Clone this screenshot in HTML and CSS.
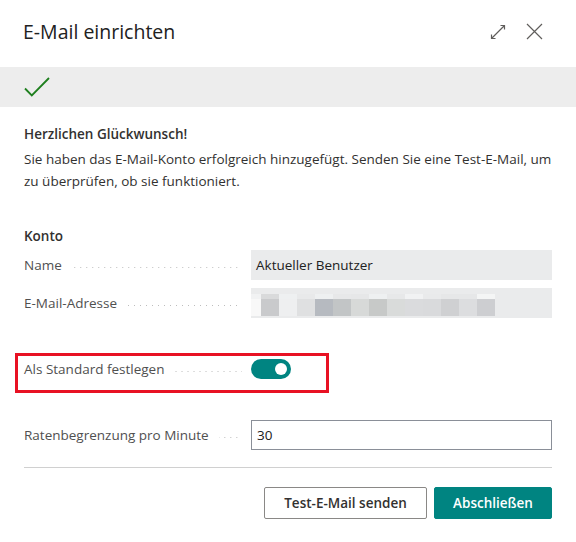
FILE: index.html
```html
<!DOCTYPE html>
<html>
    <head>
        <meta charset="utf-8">
        <link rel="stylesheet" href="styles.css">
    </head>

    <body>
        <div class="dialog">
            <header class="head">
                <h1>E-Mail einrichten</h1>
                <div class="tools">
                    <svg class="ico" width="16" height="16" viewBox="0 0 16 16">
                        <path d="M10.5 1.5h4v4M14.5 1.5l-13 13M1.5 10.5v4h4" />
                    </svg>
                    <svg class="ico close" width="17" height="17" viewBox="0 0 17 17">
                        <path d="M1 1l15 15M16 1L1 16" />
                    </svg>
                </div>
            </header>

            <div class="status">
                <svg width="28" height="22" viewBox="0 0 28 22">
                    <path d="M1 11.5l6.8 7L25 1" />
                </svg>
            </div>

            <div class="content">
                <h2>Herzlichen Glückwunsch!</h2>
                <p>Sie haben das E-Mail-Konto erfolgreich hinzugefügt. Senden Sie eine Test-E-Mail, um zu überprüfen, ob sie funktioniert.</p>

                <h3>Konto</h3>
                <div class="field">
                    <div class="label"><span>Name</span><i class="lead"></i></div>
                    <div class="value ro">Aktueller Benutzer</div>
                </div>
                <div class="field">
                    <div class="label"><span>E-Mail-Adresse</span><i class="lead"></i></div>
                    <div class="value ro">
                        <div class="pixels">
                            <span></span><span></span><span></span><span></span><span></span>
                            <span></span><span></span><span></span><span></span><span></span>
                            <span></span><span></span><span></span><span></span>
                        </div>
                    </div>
                </div>

                <div class="field toggle-row marked">
                    <div class="label"><span>Als Standard festlegen</span><i class="lead"></i></div>
                    <div class="value">
                        <span class="switch"><span class="knob"></span></span>
                    </div>
                </div>

                <div class="field rate">
                    <div class="label"><span>Ratenbegrenzung pro Minute</span><i class="lead"></i></div>
                    <input class="value edit" type="text" value="30">
                </div>

                <div class="divider"></div>

                <div class="actions">
                    <button class="btn">Test-E-Mail senden</button>
                    <button class="btn primary">Abschließen</button>
                </div>
            </div>
        </div>
    </body>
</html>
```

FILE: styles.css
```css
* {
    box-sizing: border-box;
}

body {
    margin: 0;
    padding: 0;
    background-color: #fff;
    font-family: "Open Sans", "Noto Sans", Arial, sans-serif;
    font-size: 13.5px;
    color: #212121;
}

.dialog {
    width: 576px;
    height: 542px;
}

.head {
    height: 67px;
    display: flex;
    align-items: center;
    padding: 0 33px 0 23px;
}

.head h1 {
    flex: 1;
    margin: 0;
    font-size: 19.5px;
    font-weight: 400;
    color: #212121;
    padding-bottom: 4px;
}

.tools {
    display: flex;
    align-items: center;
    gap: 20px;
    padding-bottom: 4px;
}

.ico path {
    fill: none;
    stroke: #605e5c;
    stroke-width: 1.2;
}

.status {
    height: 40px;
    background-color: #ededed;
    padding: 10px 0 0 24px;
}

.status path {
    fill: none;
    stroke: #1e7f1e;
    stroke-width: 1.8;
}

.content {
    padding: 0 24px;
}

h2 {
    margin: 17px 0 0;
    font-size: 13.5px;
    font-weight: 600;
    line-height: 20px;
    color: #323130;
}

p {
    margin: 4px 0 0;
    line-height: 22px;
    color: #323130;
}

h3 {
    margin: 34px 0 4px;
    font-size: 13.5px;
    font-weight: 600;
    line-height: 20px;
    color: #323130;
}

.field {
    display: grid;
    grid-template-columns: 218px 301px;
    column-gap: 9px;
    align-items: center;
    height: 30px;
    margin-bottom: 8px;
}

.label {
    display: flex;
    align-items: center;
    color: #505050;
    white-space: nowrap;
}

.lead {
    flex: 1;
    height: 1px;
    margin: 4px 0 0 10px;
    background-image: linear-gradient(to right, #bdbdbd 1px, transparent 1px);
    background-size: 6px 1px;
    background-repeat: repeat-x;
    background-position: right;
}

.value {
    height: 30px;
    display: flex;
    align-items: center;
    padding: 0 5px;
    font-size: 13.5px;
    color: #212121;
}

.ro {
    background-color: #eaebec;
}

.pixels {
    display: grid;
    grid-template-columns: 10px repeat(13, 18px);
    height: 22px;
    margin: 3px 0 0 -5px;
}

.pixels span {
    border-top: 5px solid #eef0f1;
    background-color: #dcdddf;
}

.pixels span:nth-child(1) { border-top-color: #f1f2f3; background-color: #f8f8f8; }
.pixels span:nth-child(2) { border-top-color: #d9dadb; background-color: #c9cacc; }
.pixels span:nth-child(3) { border-top-color: #eef0f1; background-color: #eeeff0; }
.pixels span:nth-child(4) { border-top-color: #e8e9ea; background-color: #dfe0e1; }
.pixels span:nth-child(5) { border-top-color: #eef0f1; background-color: #b6bac0; }
.pixels span:nth-child(6) { border-top-color: #e7e8e9; background-color: #c2c5c6; }
.pixels span:nth-child(7) { border-top-color: #e6e7e8; background-color: #d7d9d8; }
.pixels span:nth-child(8) { border-top-color: #eef0f1; background-color: #c7c9c8; }
.pixels span:nth-child(9) { border-top-color: #e7e8e9; background-color: #d9dbda; }
.pixels span:nth-child(10) { border-top-color: #f1f2f3; background-color: #dadbdd; }
.pixels span:nth-child(11) { border-top-color: #e9eaeb; background-color: #d9dadc; }
.pixels span:nth-child(12) { border-top-color: #e6e7e8; background-color: #cfd0d2; }
.pixels span:nth-child(13) { border-top-color: #e6e7e8; background-color: #dcdddf; }
.pixels span:nth-child(14) { border-top-color: #f4f5f5; background-color: #cdced1; }

.toggle-row {
    margin-top: 36px;
}

.marked {
    position: relative;
}

.marked::after {
    content: "";
    position: absolute;
    left: -9px;
    top: -1px;
    width: 308px;
    height: 34px;
    border: 3px solid #e81123;
}

.toggle-row .value {
    padding: 0;
}

.switch {
    width: 40px;
    height: 20px;
    border-radius: 10px;
    background-color: #008481;
    display: flex;
    align-items: center;
    justify-content: flex-end;
    padding-right: 4px;
}

.knob {
    width: 12px;
    height: 12px;
    border-radius: 50%;
    background-color: #fff;
}

.rate {
    margin-top: 36px;
    margin-bottom: 0;
}

input.edit {
    border: 1px solid #8a8f98;
    font-family: inherit;
    background-color: #fff;
    outline: none;
}

.divider {
    height: 1px;
    background-color: #d0d0d0;
    margin-top: 17px;
}

.actions {
    display: flex;
    justify-content: flex-end;
    gap: 7px;
    margin-top: 19px;
}

.btn {
    height: 32px;
    padding: 0 6px;
    border: 1px solid #8a8886;
    border-radius: 2px;
    background-color: #fff;
    font-family: inherit;
    font-size: 13.5px;
    font-weight: 600;
    color: #323130;
    white-space: nowrap;
}

.btn:first-child {
    width: 163px;
}

.btn.primary {
    width: 118px;
    border-color: #008481;
    background-color: #008481;
    color: #fff;
}
```
